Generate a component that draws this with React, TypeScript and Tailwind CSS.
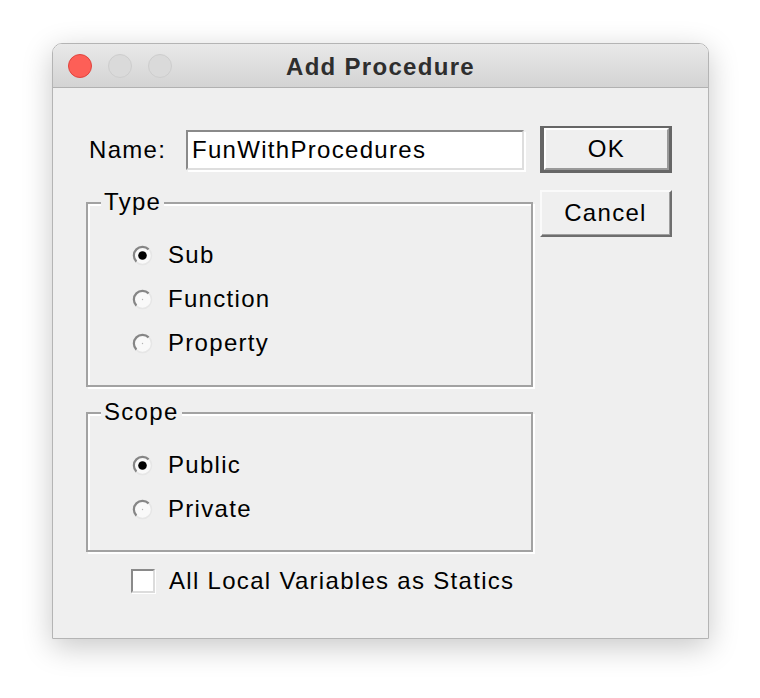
import React from "react";

function Radio({ checked }: { checked?: boolean }) {
  return (
    <svg width="21" height="21" viewBox="0 0 21 21" className="shrink-0">
      <circle cx="10.5" cy="10.5" r="9" fill="#f9f9f9" stroke="#e6e6e6" strokeWidth="1.5" />
      <path d="M4.4 16.6 A8.6 8.6 0 0 1 16.6 4.4" stroke="#868686" strokeWidth="2.2" fill="none" />
      {checked ? (
        <circle cx="10.5" cy="10.5" r="4.3" fill="#000" />
      ) : (
        <circle cx="10.5" cy="10.5" r="0.7" fill="#b5b5b5" />
      )}
    </svg>
  );
}

function RadioRow({ label, checked }: { label: string; checked?: boolean }) {
  return (
    <div className="flex h-[44px] items-center gap-[15px]">
      <Radio checked={checked} />
      <span>{label}</span>
    </div>
  );
}

export default function App() {
  return (
    <div className="min-h-[698px] w-[760px] bg-white pt-[43px] pl-[52px] font-['Liberation_Sans',Arial,sans-serif] text-[24px] tracking-[1.3px] text-black">
      <div className="flex h-[596px] w-[657px] flex-col overflow-hidden rounded-t-[10px] border border-[#b4b4b4] shadow-[0_8px_30px_rgba(0,0,0,0.22)]">
        {/* title bar */}
        <div className="grid h-[44px] shrink-0 grid-cols-[1fr_auto_1fr] items-center border-b border-[#b1b1b1] bg-gradient-to-b from-[#e9e9e9] to-[#d3d3d3]">
          <div className="flex items-center gap-[16px] pl-[15px]">
            <div className="h-[24px] w-[24px] rounded-full border border-[#e0443e] bg-[#fd5f57]" />
            <div className="h-[24px] w-[24px] rounded-full border border-[#cdcdcd] bg-[#dadada]" />
            <div className="h-[24px] w-[24px] rounded-full border border-[#cdcdcd] bg-[#dadada]" />
          </div>
          <div className="pt-[3px] text-[24px] font-bold tracking-[1.3px] text-[#2e2e2e]">Add Procedure</div>
          <div />
        </div>
        {/* body */}
        <div className="flex flex-1 gap-[7px] bg-[#efefef] pl-[33px] pt-[38px]">
          {/* left column */}
          <div className="flex w-[447px] flex-col">
            <div className="flex h-[47px] items-center">
              <span className="w-[100px] pl-[3px]">Name:</span>
              <div className="flex h-[40px] w-[338px] items-center border-2 border-t-[#8a8a8a] border-l-[#8a8a8a] border-r-[#dedede] border-b-[#dedede] bg-white pl-[4px] shadow-[2px_2px_0_#fff]">
                FunWithProcedures
              </div>
            </div>

            <div className="relative mt-[29px] h-[185px] border-2 border-[#a2a2a2] pl-[44px] pt-[29px] shadow-[inset_2px_2px_0_#fff,2px_2px_0_#fff]">
              <span className="absolute left-[13px] top-[-16px] bg-[#efefef] px-[3px] leading-[28px]">Type</span>
              <RadioRow label="Sub" checked />
              <RadioRow label="Function" />
              <RadioRow label="Property" />
            </div>

            <div className="relative mt-[25px] h-[140px] border-2 border-[#a2a2a2] pl-[44px] pt-[29px] shadow-[inset_2px_2px_0_#fff,2px_2px_0_#fff]">
              <span className="absolute left-[13px] top-[-16px] bg-[#efefef] px-[3px] leading-[28px]">Scope</span>
              <RadioRow label="Public" checked />
              <RadioRow label="Private" />
            </div>

            <div className="mt-[7px] flex h-[44px] items-center gap-[14px] pl-[45px]">
              <div className="h-[24px] w-[24px] border-2 border-t-[#8a8a8a] border-l-[#8a8a8a] border-r-[#dcdcdc] border-b-[#dcdcdc] bg-white shadow-[1px_1px_0_#fff]" />
              <span>All Local Variables as Statics</span>
            </div>
          </div>

          {/* right column */}
          <div className="flex w-[132px] flex-col gap-[17px]">
            <div className="h-[47px] border-[#666] border-t-2 border-l-[4px] border-r-[3px] border-b-[3px]">
              <div className="flex h-full items-center justify-center border-2 border-t-white border-l-white border-r-[#999] border-b-[#999] bg-[#efefef]">
                OK
              </div>
            </div>
            <div className="h-[47px] border-2 border-t-[#fafafa] border-l-[#fafafa] border-r-[#6e6e6e] border-b-[#6e6e6e]">
              <div className="flex h-full items-center justify-center border-r-[1px] border-b-[1px] border-[#a0a0a0] bg-[#efefef]">
                Cancel
              </div>
            </div>
          </div>
        </div>
      </div>
    </div>
  );
}
